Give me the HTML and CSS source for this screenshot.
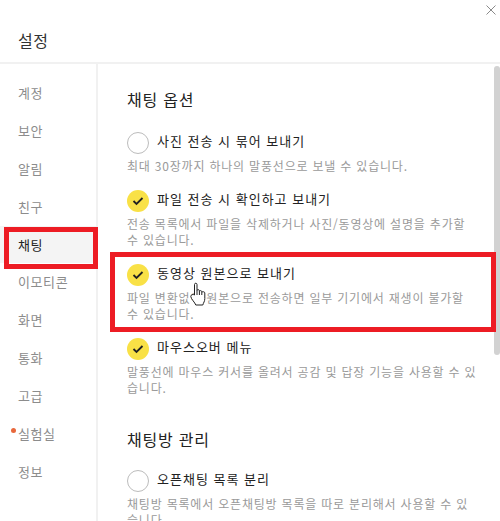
FILE: index.html
```html
<!DOCTYPE html>
<html lang="ko">
<head>
    <meta charset="UTF-8">
    <title>설정</title>
    <link rel="stylesheet" href="styles.css">
</head>
<body>
    <div class="window">
        <!-- 헤더 -->
        <header class="header">
            <h1>설정</h1>
            <svg class="close" width="10" height="10" viewBox="0 0 10 10">
                <path d="M0.5 0.5L9.5 9.5M9.5 0.5L0.5 9.5" stroke="#8a8a8a" stroke-width="1" fill="none"/>
            </svg>
        </header>

        <div class="body">
            <!-- 메뉴 -->
            <nav class="side">
                <a href="#">계정</a>
                <a href="#">보안</a>
                <a href="#">알림</a>
                <a href="#">친구</a>
                <a href="#" class="on">채팅</a>
                <a href="#">이모티콘</a>
                <a href="#">화면</a>
                <a href="#">통화</a>
                <a href="#">고급</a>
                <a href="#" class="dot">실험실</a>
                <a href="#">정보</a>
            </nav>

            <!-- 내용 -->
            <main class="content">
                <h2>채팅 옵션</h2>

                <div class="option">
                    <div class="option-head">
                        <span class="radio"></span>
                        <span class="label">사진 전송 시 묶어 보내기</span>
                    </div>
                    <p>최대 30장까지 하나의 말풍선으로 보낼 수 있습니다.</p>
                </div>

                <div class="option">
                    <div class="option-head">
                        <span class="radio checked"><svg width="12" height="10" viewBox="0 0 12 10"><path d="M1.5 5L4.5 8L10.5 2" stroke="#222" stroke-width="1.8" fill="none"/></svg></span>
                        <span class="label">파일 전송 시 확인하고 보내기</span>
                    </div>
                    <p>전송 목록에서 파일을 삭제하거나 사진/동영상에 설명을 추가할 수 있습니다.</p>
                </div>

                <div class="option">
                    <div class="option-head">
                        <span class="radio checked"><svg width="12" height="10" viewBox="0 0 12 10"><path d="M1.5 5L4.5 8L10.5 2" stroke="#222" stroke-width="1.8" fill="none"/></svg></span>
                        <span class="label">동영상 원본으로 보내기</span>
                    </div>
                    <p>파일 변환없이 원본으로 전송하면 일부 기기에서 재생이 불가할 수 있습니다.</p>
                </div>

                <div class="option">
                    <div class="option-head">
                        <span class="radio checked"><svg width="12" height="10" viewBox="0 0 12 10"><path d="M1.5 5L4.5 8L10.5 2" stroke="#222" stroke-width="1.8" fill="none"/></svg></span>
                        <span class="label">마우스오버 메뉴</span>
                    </div>
                    <p>말풍선에 마우스 커서를 올려서 공감 및 답장 기능을 사용할 수 있습니다.</p>
                </div>

                <h2 class="second">채팅방 관리</h2>

                <div class="option">
                    <div class="option-head">
                        <span class="radio"></span>
                        <span class="label">오픈채팅 목록 분리</span>
                    </div>
                    <p>채팅방 목록에서 오픈채팅방 목록을 따로 분리해서 사용할 수 있습니다.</p>
                </div>
            </main>

            <div class="scrollbar"></div>
        </div>

        <!-- 빨간 강조 박스 -->
        <div class="mark mark-side"></div>
        <div class="mark mark-option"></div>

        <!-- 커서 -->
        <svg class="cursor" width="17" height="24" viewBox="0 0 17 24">
            <path d="M4.5 13V2.5C4.5 0.8 7 0.8 7 2.5V8.5C7 7.3 9.4 7.3 9.4 8.7V9.5C9.4 8.3 11.8 8.3 11.8 9.7V10.5C11.8 9.4 14.8 9.4 14.8 11V16.5C14.8 19.5 13.5 20.5 12.8 23H5.8C5 20.5 1 17 0.8 14.5C0.8 12.5 3 12 4.5 13Z" fill="#fff" stroke="#222" stroke-width="1"/>
            <path d="M7 8.5V13M9.4 9.5V13M11.8 10.5V13" stroke="#222" stroke-width="1" fill="none"/>
        </svg>
    </div>
</body>
</html>
```

FILE: styles.css
```css
/* 공통 */
body {
    margin: 0;
    background: #fff;
    font-family: "Noto Sans CJK KR", "Noto Sans", sans-serif;
}

.window {
    position: relative;
    width: 500px;
    height: 521px;
    overflow: hidden;
}

/* 헤더 */
.header {
    box-sizing: border-box;
    height: 64px;
    padding: 30px 18px 0;
    border-bottom: 2px solid #f1f1f1;
}

.header h1 {
    margin: 0;
    font-size: 16px;
    line-height: 20px;
    font-weight: 400;
    letter-spacing: 0.5px;
    color: #333;
}

.close {
    position: absolute;
    top: 5px;
    right: 4px;
}

.body {
    display: flex;
    height: 457px;
}

/* 메뉴 */
.side {
    width: 96px;
    flex: none;
    padding-top: 10px;
    border-right: 2px solid #f1f1f1;
    display: flex;
    flex-direction: column;
}

.side a {
    position: relative;
    height: 37.9px;
    line-height: 38px;
    padding-left: 18px;
    font-size: 13px;
    letter-spacing: 0.6px;
    color: #8c8c8c;
    text-decoration: none;
}

.side a.on {
    color: #222;
    background: #f4f4f4;
}

.side a.dot::before {
    content: "";
    position: absolute;
    left: 11px;
    top: 13px;
    width: 5px;
    height: 5px;
    border-radius: 50%;
    background: #e8683c;
}

/* 내용 */
.content {
    flex: 1;
    padding: 24px 23px 0 29px;
    min-width: 0;
}

h2 {
    margin: 0 0 22px;
    font-size: 16px;
    line-height: 22px;
    font-weight: 400;
    letter-spacing: 0.8px;
    color: #222;
}

h2.second {
    margin-top: 32px;
    margin-bottom: 20px;
}

.option {
    margin-bottom: 16px;
}

.option-head {
    display: flex;
    align-items: center;
    gap: 8px;
    height: 22px;
}

.radio {
    width: 22px;
    height: 22px;
    box-sizing: border-box;
    flex: none;
    border: 1px solid #bcbcbc;
    border-radius: 50%;
    display: flex;
    justify-content: center;
    align-items: center;
}

.radio.checked {
    border: none;
    background: #f9e146;
}

.label {
    padding-bottom: 5px;
    font-size: 13px;
    letter-spacing: 1px;
    color: #222;
}

.option p {
    margin: 4px 0 0;
    font-size: 12px;
    line-height: 16px;
    letter-spacing: 0.8px;
    word-break: break-all;
    color: #9a9a9a;
}

/* 스크롤바 */
.scrollbar {
    position: absolute;
    top: 66px;
    right: 0;
    width: 6px;
    height: 289px;
    background: #d2d2d2;
    border-radius: 3px;
}

/* 강조 박스 */
.mark {
    position: absolute;
    box-sizing: border-box;
    border: 5px solid #ed1c24;
}

.mark-side {
    left: 4px;
    top: 227px;
    width: 94px;
    height: 42px;
}

.mark-option {
    left: 110px;
    top: 252px;
    width: 386px;
    height: 80px;
}

.cursor {
    position: absolute;
    left: 190px;
    top: 282px;
}
```
